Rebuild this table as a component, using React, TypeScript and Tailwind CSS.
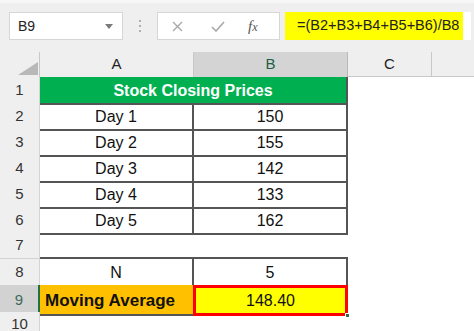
import React from "react";

const font = "font-['Liberation_Sans',Arial,sans-serif]";
const cols = "grid grid-cols-[40px_154px_154px_84px_1fr]";

const RowHead: React.FC<{ n: number; active?: boolean }> = ({ n, active }) => (
  <div
    className={
      active
        ? "flex items-center justify-center bg-[#d2d2d2] border-b border-[#c8c8c8] border-r-2 border-r-[#217346] text-[15px] text-[#3f6a5c]"
        : "flex items-center justify-center bg-[#efefef] border-b border-r border-[#d4d4d4] text-[15px] text-[#333]"
    }
  >
    {n}
  </div>
);

const App: React.FC = () => {
  const days: [string, string][] = [
    ["Day 1", "150"],
    ["Day 2", "155"],
    ["Day 3", "142"],
    ["Day 4", "133"],
    ["Day 5", "162"],
  ];

  return (
    <div className={`w-[474px] h-[331px] overflow-hidden bg-white text-[#111] ${font}`}>
      {/* formula bar */}
      <div className="h-[52px] bg-[#efefef] border-t-[3px] border-[#f7f7f7] flex items-start pt-[9px]">
        <div className="ml-[9px] w-[114px] h-[28px] bg-white border border-[#d6d6d6] flex items-center justify-between pl-[8px] pr-[9px]">
          <span className="text-[14px] text-[#222]">B9</span>
          <svg width="8" height="5" viewBox="0 0 8 5">
            <path d="M0 0 L8 0 L4 5 Z" fill="#7a7a7a" />
          </svg>
        </div>
        <div className="w-[34px] h-[28px] flex flex-col items-center justify-center gap-[3px]">
          <span className="w-[2px] h-[2px] bg-[#b0b0b0]" />
          <span className="w-[2px] h-[2px] bg-[#b0b0b0]" />
          <span className="w-[2px] h-[2px] bg-[#b0b0b0]" />
        </div>
        <div className="w-[123px] h-[28px] bg-white border border-[#d6d6d6] flex items-center">
          <svg className="ml-[14px]" width="11" height="11" viewBox="0 0 11 11">
            <path d="M1 1 L10 10 M10 1 L1 10" stroke="#a8a8a8" strokeWidth="1.4" />
          </svg>
          <svg className="ml-[28px]" width="14" height="11" viewBox="0 0 14 11">
            <path d="M1 6 L5 10 L13 1" stroke="#a8a8a8" strokeWidth="1.6" fill="none" />
          </svg>
          <span className="ml-[23px] text-[15px] italic text-[#555] font-['Liberation_Serif',serif]">
            f<span className="text-[12px]">x</span>
          </span>
        </div>
        <div className="ml-[5px] w-[186px] h-[28px] bg-white flex">
          <div className="w-[178px] h-full shrink-0 bg-[#ffff00] flex items-center pl-[12px] whitespace-nowrap text-[14.5px] text-[#222]">
            =(B2+B3+B4+B5+B6)/B8
          </div>
        </div>
      </div>

      {/* column headers */}
      <div className={`${cols} h-[25px] text-[15px] text-[#222]`}>
        <div className="bg-[#efefef] border-r border-[#c8c8c8] flex items-end justify-end pr-[1px] pb-[2px]">
          <svg width="20" height="13" viewBox="0 0 20 13">
            <path d="M20 0 L20 13 L0 13 Z" fill="#b8b8b8" />
          </svg>
        </div>
        <div className="bg-[#efefef] border-r border-[#c8c8c8] flex items-center justify-center">A</div>
        <div className="bg-[#d4d4d4] border-r border-[#b8b8b8] flex items-center justify-center text-[#1f5f45]">B</div>
        <div className="bg-[#efefef] border-r border-b border-[#c8c8c8] flex items-center justify-center">C</div>
        <div className="bg-[#efefef] border-b border-[#c8c8c8]" />
      </div>

      {/* row 1 */}
      <div className={`${cols} h-[26px] text-[16px]`}>
        <RowHead n={1} />
        <div className="col-span-2 bg-[#00b050] border-r-2 border-b-2 border-[#555] flex items-center justify-center pt-[2px] font-bold text-white">
          Stock Closing Prices
        </div>
        <div />
        <div />
      </div>

      {days.map(([d, v], i) => (
        <div key={d} className={`${cols} h-[26px] text-[16px]`}>
          <RowHead n={i + 2} />
          <div className="border-r-2 border-b-2 border-[#555] flex items-center justify-center pt-[2px]">{d}</div>
          <div className="border-r-2 border-b-2 border-[#555] flex items-center justify-center pt-[2px]">{v}</div>
          <div />
          <div />
        </div>
      ))}

      {/* row 7 */}
      <div className={`${cols} h-[26px] text-[16px]`}>
        <RowHead n={7} />
        <div className="col-span-2 border-b-2 border-[#555]" />
        <div />
        <div />
      </div>

      {/* row 8 */}
      <div className={`${cols} h-[26px] text-[16px]`}>
        <RowHead n={8} />
        <div className="border-r-2 border-b-2 border-[#555] flex items-center justify-center pt-[2px]">N</div>
        <div className="border-r-2 border-b-2 border-[#555] flex items-center justify-center pt-[2px]">5</div>
        <div />
        <div />
      </div>

      {/* row 9 */}
      <div className={`${cols} h-[27px] text-[16px]`}>
        <RowHead n={9} active />
        <div className="bg-[#ffc000] border-b-2 border-[#555] flex items-center pl-[5px] pt-[2px] text-[17px] font-bold whitespace-nowrap">
          Moving Average
        </div>
        <div className="relative -ml-[1px] bg-[#ffff00] border-[3px] border-[#ff0000] flex items-center justify-center pt-[1px]">
          148.40
          <span className="absolute -right-[5px] -bottom-[5px] w-[5px] h-[5px] bg-[#3b6b4c] border border-white" />
        </div>
        <div />
        <div />
      </div>

      {/* row 10 */}
      <div className={`${cols} h-[26px] text-[16px]`}>
        <RowHead n={10} />
        <div />
        <div />
        <div />
        <div />
      </div>
    </div>
  );
};

export default App;
